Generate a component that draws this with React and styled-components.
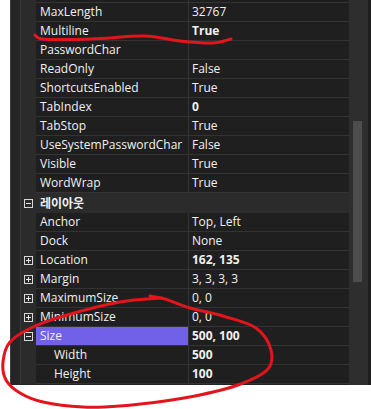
import React from "react";
import styled, { createGlobalStyle } from "styled-components";

const GlobalStyle = createGlobalStyle`
  html, body {
    margin: 0;
    padding: 0;
    background: #ffffff;
  }
  body {
    font-family: "Open Sans", "Noto Sans CJK KR", sans-serif;
  }
`;

const rows = [
  { name: "MaxLength", value: "32767" },
  { name: "Multiline", value: "True", bold: true },
  { name: "PasswordChar", value: "" },
  { name: "ReadOnly", value: "False" },
  { name: "ShortcutsEnabled", value: "True" },
  { name: "TabIndex", value: "0", bold: true },
  { name: "TabStop", value: "True" },
  { name: "UseSystemPasswordChar", value: "False" },
  { name: "Visible", value: "True" },
  { name: "WordWrap", value: "True" },
  { category: "레이아웃" },
  { name: "Anchor", value: "Top, Left" },
  { name: "Dock", value: "None" },
  { name: "Location", value: "162, 135", bold: true, toggle: "plus" },
  { name: "Margin", value: "3, 3, 3, 3", toggle: "plus" },
  { name: "MaximumSize", value: "0, 0", toggle: "plus" },
  { name: "MinimumSize", value: "0, 0", toggle: "plus" },
  { name: "Size", value: "500, 100", bold: true, toggle: "minus", selected: true },
  { name: "Width", value: "500", bold: true, indent: true },
  { name: "Height", value: "100", bold: true, indent: true },
];

// smooth curve through points (catmull-rom -> cubic bezier)
function smoothPath(pts) {
  let d = `M ${pts[0][0]} ${pts[0][1]}`;
  for (let i = 0; i < pts.length - 1; i++) {
    const p0 = pts[i - 1] || pts[i];
    const p1 = pts[i];
    const p2 = pts[i + 1];
    const p3 = pts[i + 2] || p2;
    const c1x = p1[0] + (p2[0] - p0[0]) / 6;
    const c1y = p1[1] + (p2[1] - p0[1]) / 6;
    const c2x = p2[0] - (p3[0] - p1[0]) / 6;
    const c2y = p2[1] - (p3[1] - p1[1]) / 6;
    d += ` C ${c1x} ${c1y} ${c2x} ${c2y} ${p2[0]} ${p2[1]}`;
  }
  return d;
}

const underline = [
  [35, 35], [42, 39], [70, 39.5], [100, 38.5], [145, 36], [180, 41], [213, 43], [231, 39],
];

const loop = [
  [150, 296], [165, 299], [190, 308], [223, 316], [256, 328], [271, 350],
  [267, 370], [238, 385], [200, 395], [165, 401], [120, 406], [83, 407],
  [43, 402], [20, 393], [6, 380], [3, 362], [10, 342], [33, 327],
  [67, 315], [120, 302], [162, 298],
];

class App extends React.Component {
  renderRows = () => {
    return rows.map((item, i) => {
      if (item.category) {
        return (
          <CategoryRow key={i}>
            <Gutter>
              <ToggleBox>
                <Minus />
              </ToggleBox>
            </Gutter>
            <CategoryName>{item.category}</CategoryName>
          </CategoryRow>
        );
      }
      return (
        <Row key={i}>
          <Gutter>
            {item.toggle && (
              <ToggleBox>
                <Minus />
                {item.toggle === "plus" && <PlusBar />}
              </ToggleBox>
            )}
          </Gutter>
          <NameCell selected={item.selected} indent={item.indent}>
            {item.name}
          </NameCell>
          <Divider />
          <ValueCell bold={item.bold}>{item.value}</ValueCell>
        </Row>
      );
    });
  };

  render() {
    return (
      <Page>
        <GlobalStyle />
        <Panel>
          <LeftMargin />
          <Grid>
            <Row>
              <Gutter />
              <Stub />
              <Divider />
              <Stub />
            </Row>
            {this.renderRows()}
          </Grid>
          <ScrollTrack>
            <Thumb />
          </ScrollTrack>
          <RightEdge />
        </Panel>
        <Marks width="371" height="409" viewBox="0 0 371 409">
          <path d={smoothPath(underline)} />
          <path d={smoothPath(loop)} />
        </Marks>
      </Page>
    );
  }
}

const Page = styled.div`
  position: relative;
  width: 371px;
  height: 409px;
  overflow: hidden;
  background: #ffffff;
`;

const Panel = styled.div`
  margin-left: 10px;
  height: 385px;
  display: flex;
  background: #252526;
  border-left: 1px solid #3a3a3a;
`;

const LeftMargin = styled.div`
  width: 9px;
  flex: none;
`;

const Grid = styled.div`
  width: 328px;
  flex: none;
  border-left: 1px solid #3a3a3a;
  background: #2b2b2b;
  align-self: flex-start;
  display: flex;
  flex-direction: column;
`;

const Row = styled.div`
  display: grid;
  grid-template-columns: 15px 152px 1px 160px;
  height: 19px;
  color: #f1f1f1;
  font-size: 12px;
  line-height: 18px;

  &:first-child {
    height: 3px;
  }
`;

const Gutter = styled.div`
  background: #2b2b2b;
  display: flex;
  align-items: center;
  justify-content: center;
  padding-right: 1px;
`;

const ToggleBox = styled.div`
  position: relative;
  width: 7px;
  height: 7px;
  border: 1px solid #d8d8d8;
  display: flex;
  align-items: center;
  justify-content: center;
`;

const Minus = styled.div`
  width: 5px;
  height: 1px;
  background: #e8e8e8;
`;

const PlusBar = styled.div`
  position: absolute;
  left: 3px;
  top: 1px;
  width: 1px;
  height: 5px;
  background: #e8e8e8;
`;

const Stub = styled.div`
  background: #1f1f1f;
  border-bottom: 1px solid #333333;
`;

const NameCell = styled.div`
  background: ${(p) => (p.selected ? "#7160e8" : "#1f1f1f")};
  border-bottom: 1px solid #333333;
  padding-left: ${(p) => (p.indent ? "18px" : "4px")};
  white-space: nowrap;
  overflow: hidden;
`;

const Divider = styled.div`
  background: #333333;
`;

const ValueCell = styled.div`
  background: #1f1f1f;
  border-bottom: 1px solid #333333;
  padding-left: 3px;
  font-weight: ${(p) => (p.bold ? 700 : 400)};
  white-space: nowrap;
`;

const CategoryRow = styled.div`
  display: grid;
  grid-template-columns: 15px 1fr;
  height: 20px;
  background: #2b2b2b;
  color: #f1f1f1;
  font-size: 12px;
  line-height: 20px;
`;

const CategoryName = styled.div`
  padding-left: 4px;
  font-weight: 700;
  font-family: "Noto Sans CJK KR", sans-serif;
`;

const ScrollTrack = styled.div`
  width: 19px;
  flex: none;
  background: #2e2e2e;
  padding: 121px 0 0 4px;
  box-sizing: border-box;
`;

const Thumb = styled.div`
  width: 9px;
  height: 161px;
  background: #4d4d4d;
`;

const RightEdge = styled.div`
  flex: 1;
  background: #1e1e1e;
`;

const Marks = styled.svg`
  position: absolute;
  left: 0;
  top: 0;
  pointer-events: none;
  fill: none;
  stroke: #e3141c;
  stroke-width: 3;
  stroke-linecap: round;
  stroke-linejoin: round;
`;

export default App;
